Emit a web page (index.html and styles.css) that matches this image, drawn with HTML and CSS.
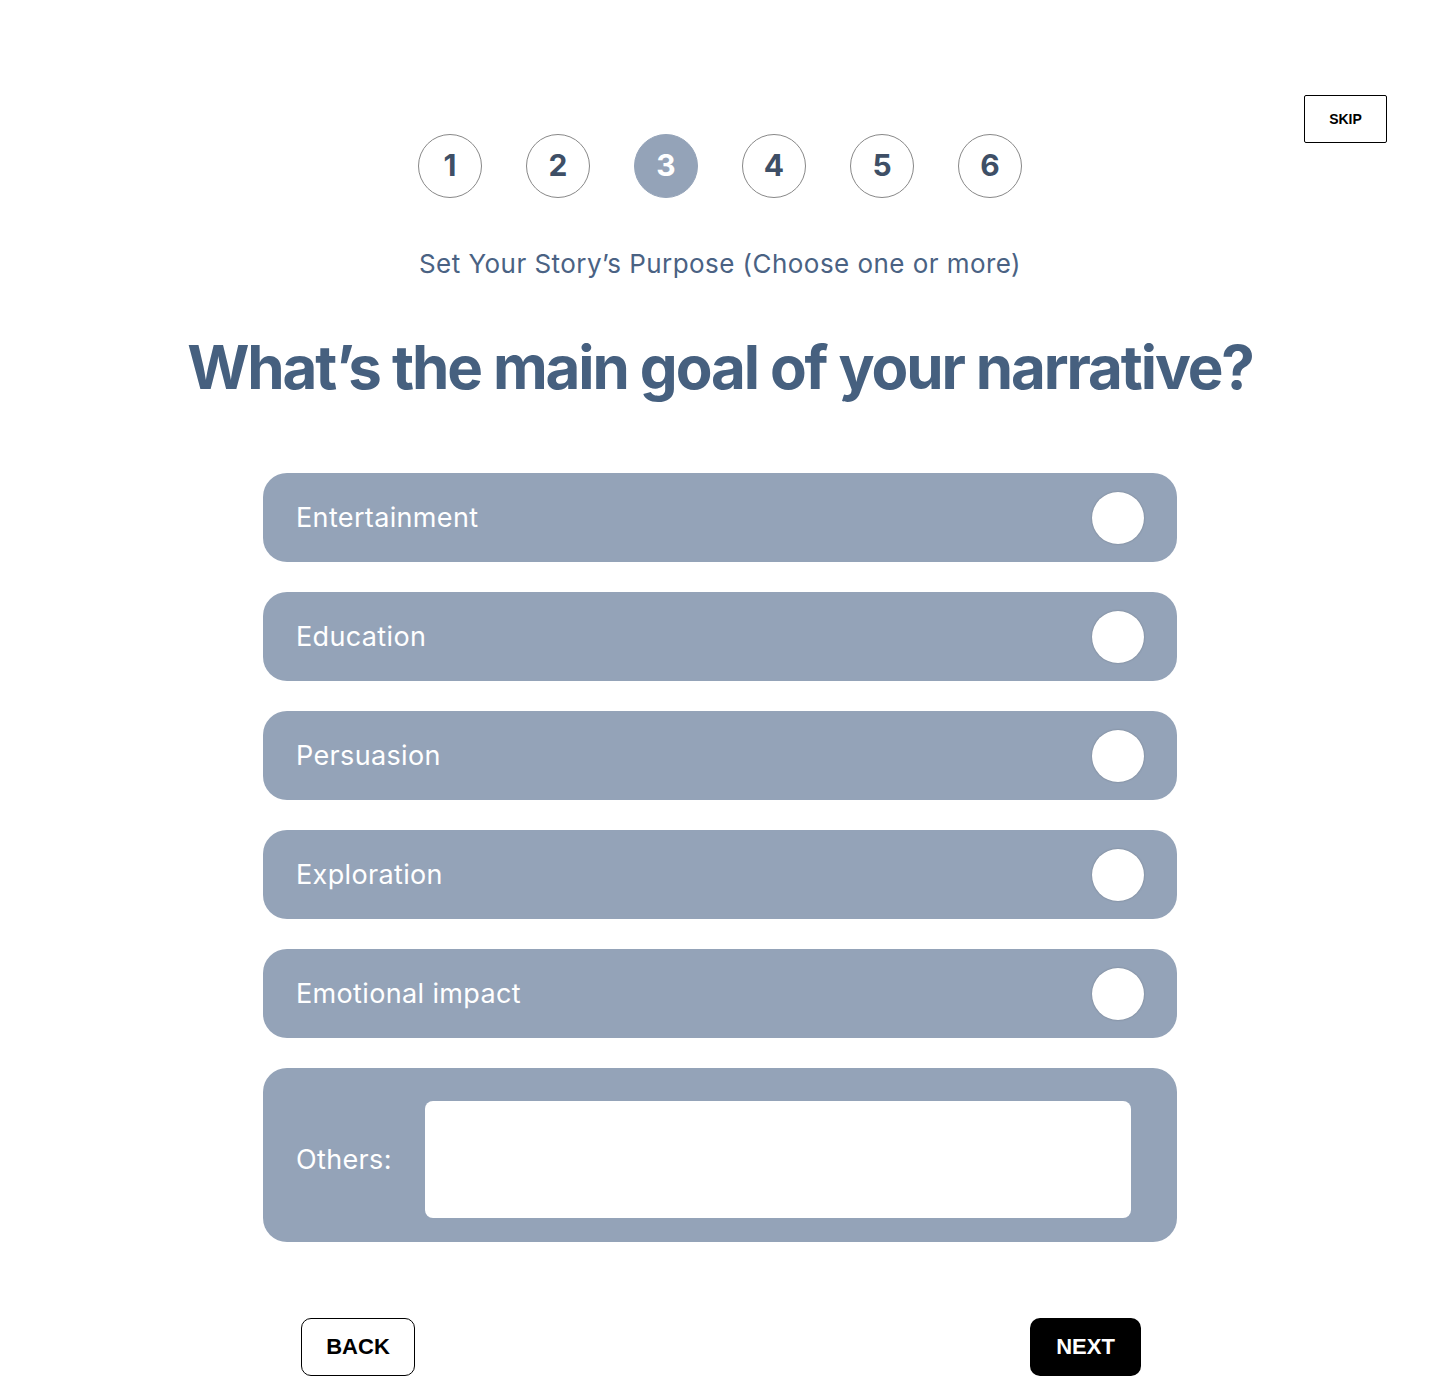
FILE: index.html
```html
<!DOCTYPE html>
<html>
<head>
<meta charset="utf-8">
<link rel="stylesheet" href="styles.css">
</head>
<body>
<div class="page">
  <button class="skip">SKIP</button>
  <div class="steps">
    <div class="step">1</div>
    <div class="step">2</div>
    <div class="step active">3</div>
    <div class="step">4</div>
    <div class="step">5</div>
    <div class="step">6</div>
  </div>
  <p class="subtitle">Set Your Story’s Purpose (Choose one or more)</p>
  <h1 class="title">What’s the main goal of your narrative?</h1>
  <div class="options">
    <div class="option"><span>Entertainment</span><span class="radio"></span></div>
    <div class="option"><span>Education</span><span class="radio"></span></div>
    <div class="option"><span>Persuasion</span><span class="radio"></span></div>
    <div class="option"><span>Exploration</span><span class="radio"></span></div>
    <div class="option"><span>Emotional impact</span><span class="radio"></span></div>
    <div class="option others"><span>Others:</span><div class="others-input"></div></div>
  </div>
  <div class="nav">
    <button class="btn back">BACK</button>
    <button class="btn next">NEXT</button>
  </div>
</div>
</body>
</html>
```
FILE: styles.css
```css
html, body { margin: 0; padding: 0; background: #fff; }
body { font-family: Inter, "Noto Sans", sans-serif; }
.page { position: relative; width: 1440px; height: 1386px; overflow: hidden; padding-top: 134px; box-sizing: border-box; }
.skip {
  position: absolute; top: 95px; left: 1304px; width: 83px; height: 48px;
  border: 1px solid #000; border-radius: 2px; background: #fff;
  font-family: "Liberation Sans", Arial, sans-serif; font-weight: 700; font-size: 14px; color: #000; padding: 0;
}
.steps { display: flex; justify-content: center; gap: 44px; }
.step {
  width: 64px; height: 64px; border-radius: 50%; box-sizing: border-box;
  border: 1px solid #888; display: flex; align-items: center; justify-content: center;
  font-family: Inter, sans-serif; font-weight: 700; font-size: 30px; color: #3e4f66; padding-bottom: 2px;
}
.step.active { background: #94a3b8; border-color: #94a3b8; color: #fff; }
.subtitle { margin: 49px 0 0; text-align: center; font-size: 26px; color: #4a6283; line-height: 34px; letter-spacing: 0.45px; }
.title { margin: 48px 0 0; text-align: center; font-size: 60px; line-height: 76px; font-weight: 700; color: #46607f; letter-spacing: -2.1px; }
.options { width: 914px; margin: 68px auto 0; display: flex; flex-direction: column; gap: 30px; }
.option {
  height: 89px; border-radius: 24px; background: #94a3b8; display: flex; align-items: center;
  justify-content: space-between; padding: 0 33px; box-sizing: border-box;
  color: #fff; font-size: 27px; letter-spacing: 0.35px;
}
.radio { width: 52px; height: 52px; border-radius: 50%; background: #fff; box-shadow: 0 0 2px rgba(0,0,0,0.25); }
.option.others { height: 174px; padding: 33px 46px 24px 33px; align-items: stretch; justify-content: flex-start; gap: 0; }
.option.others span { width: 129px; display: flex; align-items: center; }
.others-input { flex: 1; background: #fff; border-radius: 8px; }
.nav { display: flex; justify-content: space-between; padding: 0 299px 0 301px; margin-top: 76px; }
.btn { height: 58px; border-radius: 10px; font-family: "Liberation Sans", Arial, sans-serif; font-weight: 700; font-size: 22px; padding: 0; }
.back { width: 114px; border: 1px solid #000; background: #fff; color: #000; }
.next { width: 111px; border: none; background: #000; color: #fff; }
```
